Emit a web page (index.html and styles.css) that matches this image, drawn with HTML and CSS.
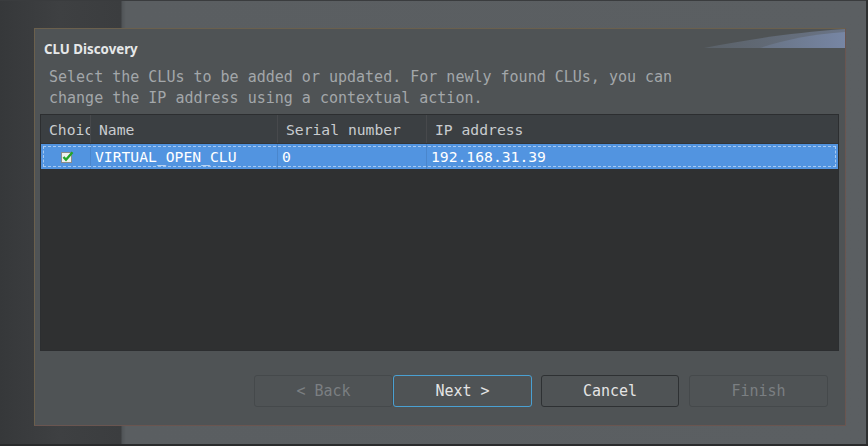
FILE: index.html
```html
<!DOCTYPE html>
<html>
<head>
<meta charset="utf-8">
<link rel="stylesheet" href="styles.css">
</head>
<body>
<div class="desktop">
  <div class="dialog">
    <div class="titlebar">
      <h1 class="title">CLU Discovery</h1>
      <svg class="swoosh" width="141" height="19" viewBox="0 0 141 19">
        <defs>
          <linearGradient id="g1" x1="0" x2="1" y1="0" y2="0">
            <stop offset="0" stop-color="#5a6168"/>
            <stop offset="1" stop-color="#6a7486"/>
          </linearGradient>
          <linearGradient id="g2" x1="0" x2="1" y1="0" y2="0">
            <stop offset="0" stop-color="#687384"/>
            <stop offset="1" stop-color="#7786a4"/>
          </linearGradient>
        </defs>
        <path d="M0 19 C 40 11, 85 4, 141 0 L141 19 Z" fill="url(#g1)"/>
        <path d="M56 19 C 80 11, 108 5, 141 3 L141 19 Z" fill="url(#g2)"/>
      </svg>
    </div>
    <p class="desc">Select the CLUs to be added or updated. For newly found CLUs, you can<br>change the IP address using a contextual action.</p>
    <div class="table">
      <div class="row head">
        <div class="cell">Choice</div>
        <div class="cell">Name</div>
        <div class="cell">Serial number</div>
        <div class="cell">IP address</div>
      </div>
      <div class="row sel">
        <div class="cell check">
          <svg width="13" height="12" viewBox="0 0 13 12">
            <rect x="0.5" y="1.5" width="10" height="10" fill="#eef0ee" stroke="#8a8c8a"/>
            <path d="M2.5 6 L5 8.8 L11.5 1.2" fill="none" stroke="#22a52a" stroke-width="2.4"/>
          </svg>
        </div>
        <div class="cell">VIRTUAL_OPEN_CLU</div>
        <div class="cell">0</div>
        <div class="cell">192.168.31.39</div>
      </div>
    </div>
    <div class="buttons">
      <button class="btn disabled">&lt; Back</button>
      <button class="btn primary">Next &gt;</button>
      <button class="btn normal gap">Cancel</button>
      <button class="btn disabled gap2">Finish</button>
    </div>
  </div>
</div>
</body>
</html>
```
FILE: styles.css
```css
html, body {
  margin: 0;
  padding: 0;
}
body {
  width: 868px;
  height: 446px;
  overflow: hidden;
}
.desktop {
  width: 868px;
  height: 446px;
  box-sizing: border-box;
  padding: 28px 0 0 34px;
  background:
    linear-gradient(to right, #36383a 0, #3e4042 60px, #3b3d3f 121px, #505457 122px, #5a5e61 126px, #5b5f62 868px);
  box-shadow: inset 0 -2px #2a2b2c, inset -2px 0 #2e3031, inset 0 1px #3a3c3e;
}
.dialog {
  position: relative;
  width: 812px;
  height: 398px;
  box-sizing: border-box;
  background: #4f5355;
  border: 1px solid #6b604d;
  border-right-color: #6a5550;
  border-bottom-color: #6a5550;
  display: flex;
  flex-direction: column;
  padding: 11px 6px 0 5px;
}
.titlebar {
  height: 18px;
}
.title {
  margin: 0 0 0 4px;
  font-family: "Noto Sans", sans-serif;
  font-weight: bold;
  font-size: 13.3px;
  line-height: 18px;
  color: #e6e8e9;
}
.swoosh {
  position: absolute;
  right: 0;
  top: 0;
}
.desc {
  margin: 9px 0 0 9px;
  font-family: "DejaVu Sans Mono", monospace;
  font-size: 15px;
  line-height: 21px;
  color: #a3a7aa;
}
.table {
  margin-top: 5px;
  height: 237px;
  box-sizing: border-box;
  border: 1px solid #2c2e30;
  background: #2f3031;
  flex: none;
}
.row {
  display: grid;
  grid-template-columns: 50px 187px 149px 1fr;
  font-family: "DejaVu Sans Mono", monospace;
  font-size: 14.7px;
}
.cell {
  white-space: nowrap;
  overflow: hidden;
  display: flex;
  align-items: center;
}
.head {
  height: 29px;
  box-sizing: border-box;
  background: #3b3f42;
  border-bottom: 1px solid #333537;
  color: #c9cccf;
}
.head .cell {
  padding-left: 8px;
  border-right: 1px solid #47494c;
}
.head .cell:last-child {
  border-right: none;
}
.sel {
  height: 25px;
  background: #5294e0;
  color: #ffffff;
  outline: 1px dashed #a6c8f0;
  outline-offset: -3px;
}
.sel .cell {
  padding-left: 4px;
  border-right: 1px solid #4a86cc;
}
.sel .cell:last-child {
  border-right: none;
}
.sel .check {
  justify-content: center;
  padding-left: 3px;
}
.buttons {
  display: flex;
  justify-content: flex-end;
  margin-top: 24px;
  padding-right: 11px;
}
.btn {
  width: 139px;
  height: 32px;
  box-sizing: border-box;
  border-radius: 3px;
  background: #4f5355;
  font-family: "DejaVu Sans Mono", monospace;
  font-size: 15px;
  padding: 0;
}
.btn.gap {
  margin-left: 9px;
  width: 138px;
}
.btn.gap2 {
  margin-left: 10px;
}
.disabled {
  border: 1px solid #45494b;
  color: #7b7f82;
}
.primary {
  border: 1px solid #4aa0d2;
  color: #e4e4e4;
}
.normal {
  border: 1px solid #2e3133;
  color: #e4e4e4;
}
```
